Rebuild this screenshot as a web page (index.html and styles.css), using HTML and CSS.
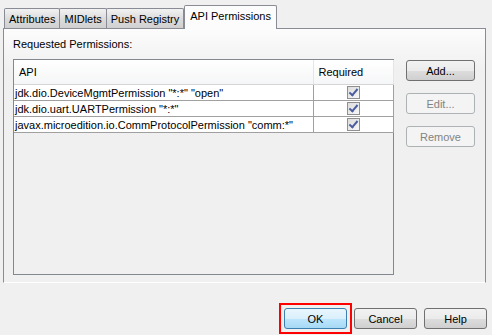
FILE: index.html
```html
<!DOCTYPE html>
<html lang="en">

<head>
    <meta charset="UTF-8">
    <title>MIDlet Properties - API Permissions</title>
    <link rel="stylesheet" href="styles.css">
</head>

<body>
    <div class="dialog">
        <div class="tabs">
            <div class="tab">Attributes</div>
            <div class="tab">MIDlets</div>
            <div class="tab">Push Registry</div>
            <div class="tab active">API Permissions</div>
        </div>

        <div class="panel">
            <div class="panel-label">Requested Permissions:</div>
            <div class="panel-body">
                <div class="grid">
                    <table class="perm-table">
                        <colgroup>
                            <col class="col-api">
                            <col class="col-req">
                        </colgroup>
                        <thead>
                            <tr>
                                <th>API</th>
                                <th>Required</th>
                            </tr>
                        </thead>
                        <tbody>
                            <tr>
                                <td>jdk.dio.DeviceMgmtPermission "*:*" "open"</td>
                                <td class="req"><span class="check"></span></td>
                            </tr>
                            <tr>
                                <td>jdk.dio.uart.UARTPermission "*:*"</td>
                                <td class="req"><span class="check"></span></td>
                            </tr>
                            <tr>
                                <td>javax.microedition.io.CommProtocolPermission "comm:*"</td>
                                <td class="req"><span class="check"></span></td>
                            </tr>
                        </tbody>
                    </table>
                </div>

                <div class="side-buttons">
                    <button class="btn">Add...</button>
                    <button class="btn" disabled>Edit...</button>
                    <button class="btn" disabled>Remove</button>
                </div>
            </div>
        </div>

        <div class="footer">
            <span class="focus-mark"><button class="btn btn-default">OK</button></span>
            <button class="btn">Cancel</button>
            <button class="btn">Help</button>
        </div>
    </div>
</body>

</html>
```

FILE: styles.css
```css
body {
    margin: 0;
    padding: 0;
    background-color: #f0f0f0;
    font-family: "Liberation Sans", Arial, sans-serif;
    font-size: 11px;
    color: #000;
}

.dialog {
    width: 492px;
    height: 335px;
}

/* tab strip */
.tabs {
    display: flex;
    align-items: flex-end;
    height: 28px;
    padding-left: 4px;
}

.tab {
    height: 19px;
    line-height: 20px;
    padding: 0 4px;
    border: 1px solid #898c95;
    border-bottom: none;
    margin-right: -1px;
    background: linear-gradient(#f2f2f2, #dcdcdc 50%, #d0d0d0);
    border-radius: 2px 2px 0 0;
}

.tab.active {
    position: relative;
    z-index: 1;
    height: 23px;
    line-height: 20px;
    margin: 0 -2px -1px 1px;
    padding: 0 5px;
    background: #fcfcfc;
}

/* panel */
.panel {
    box-sizing: border-box;
    width: 483px;
    height: 255px;
    margin-left: 3px;
    border: 1px solid #898c95;
    border-bottom-color: #ffffff;
    background: linear-gradient(#fcfcfc, #f0f0f0 40px);
    padding: 9px 0 0 9px;
}

.panel-label {
    height: 13px;
    line-height: 13px;
    padding-left: 0;
    margin-bottom: 8px;
}

.panel-body {
    display: flex;
    gap: 12px;
}

.grid {
    width: 381px;
    height: 216px;
    box-sizing: border-box;
    border: 1px solid #828790;
    background-color: #f0f0f0;
}

.perm-table {
    border-collapse: collapse;
    table-layout: fixed;
    width: 379px;
}

.col-api {
    width: 299px;
}

.col-req {
    width: 80px;
}

.perm-table th {
    height: 24px;
    font-weight: normal;
    text-align: left;
    padding: 0 0 0 5px;
    background: linear-gradient(#ffffff, #f5f6f7);
    border-right: 1px solid #e5e5e5;
    border-bottom: 1px solid #d5d5d5;
}

.perm-table td {
    height: 15px;
    padding: 0 0 0 1px;
    background-color: #ffffff;
    border: 1px solid #a0a0a0;
    border-top: none;
    white-space: nowrap;
    overflow: hidden;
}

.perm-table td:first-child {
    border-left: none;
}

.perm-table td.req {
    text-align: center;
    padding: 0;
}

.check {
    display: inline-block;
    width: 11px;
    height: 11px;
    vertical-align: middle;
    border: 1px solid #8f8f8f;
    background: linear-gradient(135deg, #dcdcdc, #f8f8f8);
    position: relative;
}

.check::after {
    content: "";
    position: absolute;
    left: 3px;
    top: 0;
    width: 3px;
    height: 7px;
    border: solid #4b5f9f;
    border-width: 0 2px 2px 0;
    transform: rotate(40deg);
}

/* buttons */
.side-buttons {
    display: flex;
    flex-direction: column;
    gap: 12px;
    padding-top: 1px;
}

.btn {
    box-sizing: border-box;
    width: 69px;
    height: 21px;
    padding: 0;
    font-family: inherit;
    font-size: 11px;
    color: #000;
    border: 1px solid #707070;
    border-radius: 3px;
    background: linear-gradient(#f2f2f2, #ebebeb 50%, #dddddd 51%, #cfcfcf);
}

.btn:disabled {
    color: #838383;
    border-color: #adb2b5;
    background: #f4f4f4;
}

.footer {
    display: flex;
    justify-content: flex-end;
    align-items: center;
    gap: 7px;
    height: 31px;
    margin-top: 20px;
    padding-right: 5px;
}

.footer .btn {
    width: 63px;
}

.focus-mark {
    display: flex;
    border: 2px solid #ff0000;
    padding: 3px;
    margin-right: -5px;
}

.btn-default {
    border-color: #3c7fb1;
    background: linear-gradient(#eaf6fd, #d9f0fc 50%, #bee6fd 51%, #a7d9f5);
}
```
